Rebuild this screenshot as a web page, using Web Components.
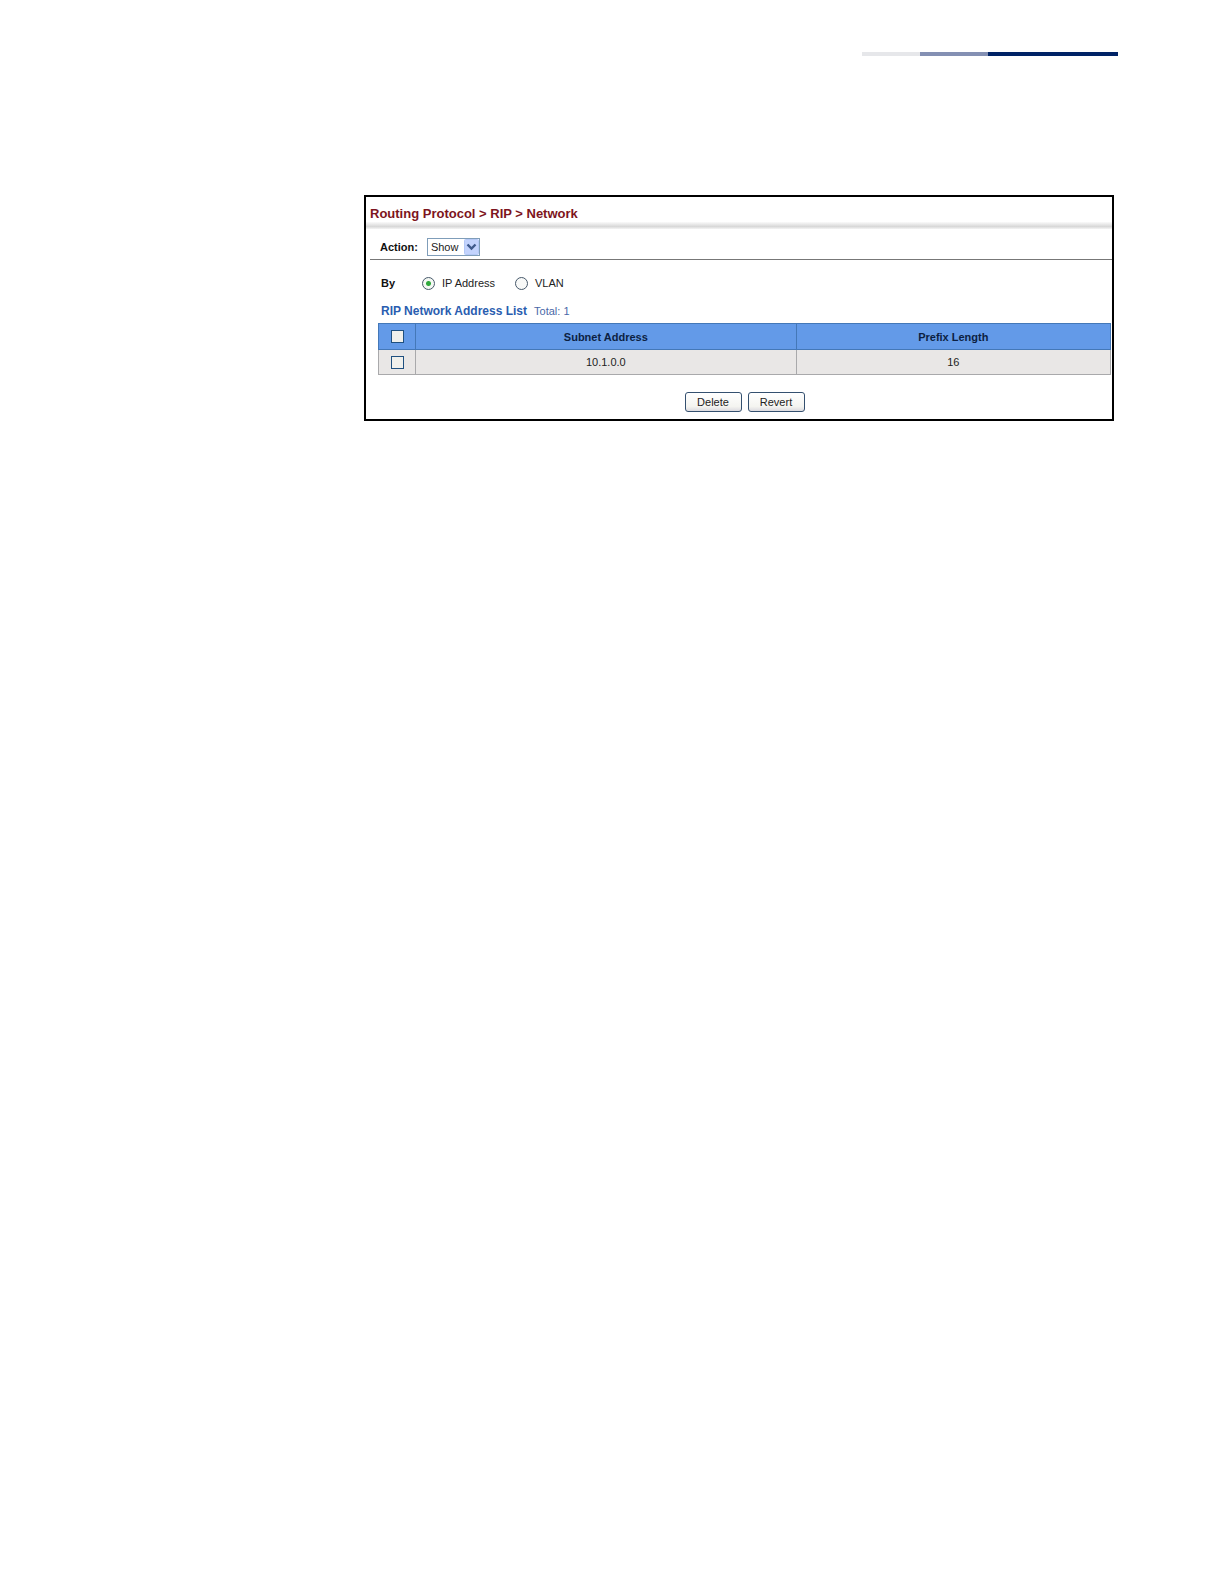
<!DOCTYPE html>
<html lang="en">
<head>
<meta charset="utf-8">
<meta name="viewport" content="width=device-width, initial-scale=1">
<title>Routing Protocol - RIP - Network</title>
<style>
  body {
    margin: 0;
    background: #fff;
    color: #222;
    font-family: "Liberation Sans", Arial, sans-serif;
    font-size: 12px;
    line-height: 16px;
  }
</style>
</head>
<body>
<manual-page>
  <page-stripe slot="header"></page-stripe>
  <config-panel heading="Routing Protocol &gt; RIP &gt; Network">
    <action-bar slot="actions" label="Action:" options="Show,Add"></action-bar>
    <radio-group label="By" name="by" options="IP Address,VLAN" selected="IP Address"></radio-group>
    <address-list heading="RIP Network Address List"></address-list>
    <button-row>
      <xp-button>Delete</xp-button>
      <xp-button>Revert</xp-button>
    </button-row>
  </config-panel>
</manual-page>

<script>
class ManualPage extends HTMLElement {
  constructor() {
    super();
    this.attachShadow({ mode: 'open' });
    this.shadowRoot.innerHTML = `
      <style>
        :host {
          display: block;
        }

        header {
          display: flex;
          justify-content: flex-end;
          padding: 52px 106px 0 0;
        }

        main {
          margin: 139px 110px 0 364px;
        }
      </style>
      <header><slot name="header"></slot></header>
      <main><slot></slot></main>
    `;
  }
}

class PageStripe extends HTMLElement {
  constructor() {
    super();
    this.attachShadow({ mode: 'open' });
    this.shadowRoot.innerHTML = `
      <style>
        :host {
          display: flex;
          height: 4px;
        }

        .light { width: 58px; background: #e6e7ea; }
        .mid { width: 68px; background: #8490b3; }
        .dark { width: 130px; background: #002366; }
      </style>
      <div class="light"></div>
      <div class="mid"></div>
      <div class="dark"></div>
    `;
  }
}

class ConfigPanel extends HTMLElement {
  constructor() {
    super();
    this.attachShadow({ mode: 'open' });
  }

  connectedCallback() {
    this.shadowRoot.innerHTML = `
      <style>
        :host {
          display: block;
          border: 2px solid #000;
          background: #fff;
        }

        h1 {
          margin: 0;
          padding: 9px 4px 0;
          color: #7d1420;
          font-size: 13px;
          line-height: 16px;
        }

        .shade {
          height: 7px;
          background: linear-gradient(#fafafa, #d8d8d8 65%, #f4f4f4);
        }

        .body {
          padding: 15px 1px 7px 12px;
        }
      </style>
      <h1></h1>
      <div class="shade"></div>
      <slot name="actions"></slot>
      <div class="body"><slot></slot></div>
    `;
    this.shadowRoot.querySelector('h1').textContent = this.getAttribute('heading');
  }
}

class ActionBar extends HTMLElement {
  constructor() {
    super();
    this.attachShadow({ mode: 'open' });
  }

  connectedCallback() {
    this.shadowRoot.innerHTML = `
      <style>
        :host {
          display: flex;
          align-items: center;
          gap: 9px;
          margin-left: 4px;
          padding: 9px 0 3px 10px;
          border-bottom: 1px solid #777;
        }

        label {
          color: #111;
          font-size: 11px;
          font-weight: bold;
        }

        .select {
          display: grid;
          align-items: center;
        }

        select, svg {
          grid-area: 1 / 1;
        }

        select {
          appearance: none;
          width: 53px;
          height: 18px;
          margin: 0;
          padding: 0 3px;
          border: 1px solid #7f9db9;
          border-radius: 0;
          background: #fff;
          color: #222;
          font: 11px/16px "Liberation Sans", Arial, sans-serif;
        }

        svg {
          justify-self: end;
          margin-right: 1px;
          pointer-events: none;
        }
      </style>
      <label for="action"></label>
      <span class="select">
        <select id="action"></select>
        <svg width="15" height="16" viewBox="0 0 15 16">
          <rect x="0.5" y="0.5" width="14" height="15" rx="1" fill="#c3d3fd" stroke="#b4c8f6"/>
          <path d="M3.5 5.5L7.5 9.5L11.5 5.5" fill="none" stroke="#3f5a8c" stroke-width="2.4"/>
        </svg>
      </span>
    `;
    this.shadowRoot.querySelector('label').textContent = this.getAttribute('label');
    const select = this.shadowRoot.querySelector('select');
    this.getAttribute('options').split(',').forEach((text) => select.add(new Option(text)));
  }
}

class RadioGroup extends HTMLElement {
  constructor() {
    super();
    this.attachShadow({ mode: 'open' });
  }

  connectedCallback() {
    const name = this.getAttribute('name');
    const selected = this.getAttribute('selected');
    const options = this.getAttribute('options').split(',').map((text) => `
      <label>
        <input type="radio" name="${name}" value="${text}" ${text === selected ? 'checked' : ''}>
        ${text}
      </label>
    `).join('');

    this.shadowRoot.innerHTML = `
      <style>
        :host {
          display: block;
          padding-left: 3px;
          font-size: 11px;
        }

        .group {
          display: flex;
          gap: 20px;
        }

        .name {
          width: 21px;
          color: #111;
          font-weight: bold;
        }

        label {
          display: flex;
          align-items: center;
          gap: 7px;
        }

        input {
          appearance: none;
          box-sizing: border-box;
          width: 13px;
          height: 13px;
          margin: 0;
          border: 1px solid #46586a;
          border-radius: 50%;
          background: #f8f9f8;
        }

        input:checked {
          background: radial-gradient(circle, #2fa83c 2px, #f4f8f3 3px);
        }
      </style>
      <div class="group" role="radiogroup" aria-labelledby="name">
        <span class="name" id="name">${this.getAttribute('label')}</span>
        ${options}
      </div>
    `;
  }
}

class AddressList extends HTMLElement {
  constructor() {
    super();
    this.attachShadow({ mode: 'open' });
    this.rows = [
      { subnet: '10.1.0.0', prefix: 16 }
    ];
  }

  connectedCallback() {
    this.shadowRoot.innerHTML = `
      <style>
        :host {
          display: block;
          margin-top: 12px;
        }

        .title {
          display: flex;
          gap: 7px;
          padding: 0 3px 4px;
          color: #4a68a8;
          font-size: 11px;
        }

        h2 {
          margin: 0;
          color: #2a5db0;
          font-size: 12px;
          line-height: 16px;
        }

        table {
          width: 100%;
          table-layout: fixed;
          border-collapse: collapse;
          font-size: 11px;
          text-align: center;
        }

        .check { width: 37px; }
        .subnet { width: 52%; }

        th, td {
          box-sizing: border-box;
          padding: 0;
          border: 1px solid #a9a9ab;
        }

        th {
          height: 26px;
          border-color: #4478b8;
          background: #639ae8;
          color: #0c1f42;
        }

        td {
          height: 25px;
          background: #e9e7e6;
          color: #222;
        }

        input {
          appearance: none;
          box-sizing: border-box;
          display: block;
          width: 13px;
          height: 13px;
          margin: 0 auto;
          border: 1px solid #1f5080;
          background: #f0f0ec;
        }
      </style>
      <div class="title"><h2>${this.getAttribute('heading')}</h2><span>Total: ${this.rows.length}</span></div>
      <table>
        <thead>
          <tr>
            <th class="check"><input type="checkbox" aria-label="Select all"></th>
            <th class="subnet">Subnet Address</th>
            <th>Prefix Length</th>
          </tr>
        </thead>
        <tbody>
          ${this.rows.map((row) => `
            <tr>
              <td><input type="checkbox" aria-label="Select ${row.subnet}"></td>
              <td>${row.subnet}</td>
              <td>${row.prefix}</td>
            </tr>
          `).join('')}
        </tbody>
      </table>
    `;

    const [all, ...boxes] = this.shadowRoot.querySelectorAll('input');
    all.addEventListener('change', () => {
      boxes.forEach((box) => { box.checked = all.checked; });
    });
  }
}

class ButtonRow extends HTMLElement {
  constructor() {
    super();
    this.attachShadow({ mode: 'open' });
    this.shadowRoot.innerHTML = `
      <style>
        :host {
          display: flex;
          justify-content: center;
          gap: 6px;
          margin-top: 17px;
        }
      </style>
      <slot></slot>
    `;
  }
}

class XpButton extends HTMLElement {
  constructor() {
    super();
    this.attachShadow({ mode: 'open' });
    this.shadowRoot.innerHTML = `
      <style>
        :host {
          display: block;
        }

        button {
          display: block;
          width: 57px;
          height: 20px;
          padding: 0;
          border: 1px solid #34506f;
          border-radius: 3px;
          background: linear-gradient(#fff, #f4f4f0 75%, #dcdbe0);
          color: #222;
          font: 11px/16px "Liberation Sans", Arial, sans-serif;
        }
      </style>
      <button type="button"><slot></slot></button>
    `;
  }
}

customElements.define('manual-page', ManualPage);
customElements.define('page-stripe', PageStripe);
customElements.define('config-panel', ConfigPanel);
customElements.define('action-bar', ActionBar);
customElements.define('radio-group', RadioGroup);
customElements.define('address-list', AddressList);
customElements.define('button-row', ButtonRow);
customElements.define('xp-button', XpButton);
</script>
</body>
</html>
